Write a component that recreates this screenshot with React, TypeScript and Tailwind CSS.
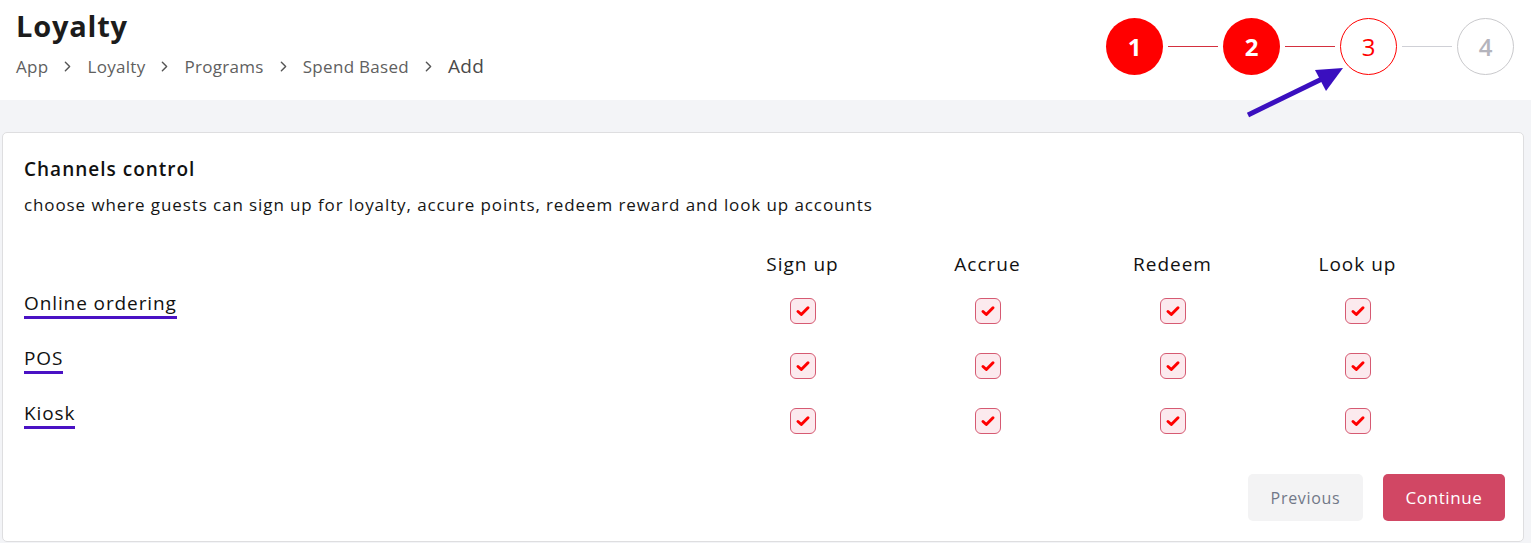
import { ChevronRight } from "lucide-react";

const columns = ["Sign up", "Accrue", "Redeem", "Look up"];
const channels = ["Online ordering", "POS", "Kiosk"];
const crumbs = ["App", "Loyalty", "Programs", "Spend Based"];

const CheckBox = () => (
  <span className="flex h-[26px] w-[26px] items-center justify-center rounded-[6px] border border-[#d65a72] bg-[#fceaee]">
    <svg width="16" height="16" viewBox="0 0 16 16" fill="none">
      <path d="M3 8.5 6.3 11.5 13 4.8" stroke="#ff0000" strokeWidth="3" strokeLinecap="round" strokeLinejoin="round" />
    </svg>
  </span>
);

const Step = ({ n, state }: { n: number; state: "done" | "current" | "todo" }) => {
  const cls =
    state === "done"
      ? "bg-[#ff0000] text-white font-bold"
      : state === "current"
        ? "border border-[#ff0000] bg-white text-[#ff0000]"
        : "border border-[#c9c9cc] bg-white text-[#b4b4bc] font-semibold";
  return (
    <div className={`flex h-[57px] w-[57px] items-center justify-center rounded-full text-[24px] ${cls}`}>{n}</div>
  );
};

const App = () => {
  return (
    <div className="relative min-h-[543px] w-full bg-[#f3f4f7] font-['Open_Sans',sans-serif]">
      <header className="flex h-[100px] items-start justify-between bg-white pl-4 pr-[17px]">
        <div className="flex flex-col">
          <h1 className="mt-[7px] text-[29px] font-bold leading-[38px] tracking-[0.8px] text-[#1c1c1c]">Loyalty</h1>
          <nav className="mt-[7px] flex items-center gap-[11px] text-[17px] tracking-[0.3px] text-[#606060]">
            {crumbs.map((c) => (
              <span key={c} className="flex items-center gap-[11px]">
                {c}
                <ChevronRight size={17} strokeWidth={2} className="text-[#555]" />
              </span>
            ))}
            <span className="text-[19px] text-[#4a4a4a]">Add</span>
          </nav>
        </div>
        <div className="mt-[18px] flex items-center">
          <Step n={1} state="done" />
          <span className="mx-[5px] h-[1.5px] w-[50px] bg-[#d4303f]" />
          <Step n={2} state="done" />
          <span className="mx-[5px] h-[1.5px] w-[50px] bg-[#d4303f]" />
          <Step n={3} state="current" />
          <span className="mx-[5px] h-[1px] w-[50px] bg-[#cfd0d6]" />
          <Step n={4} state="todo" />
        </div>
      </header>

      <svg className="absolute left-[1240px] top-[60px]" width="110" height="64" viewBox="1240 60 110 64">
        <path d="M1248 115 1326 77" stroke="#3a0fbf" strokeWidth="5" />
        <path d="M1343 68 1315 70 1326 91Z" fill="#3a0fbf" />
      </svg>

      <main className="pl-[2px] pr-[7px] pt-[32px]">
        <section className="flex h-[410px] flex-col rounded-[5px] border border-[#dedee0] bg-white px-[21px] pt-[22px]">
          <h2 className="text-[19px] font-semibold leading-[28px] tracking-[1px] text-[#111]">Channels control</h2>
          <p className="mt-[10px] text-[17px] leading-[24px] tracking-[0.9px] text-[#151515]">
            choose where guests can sign up for loyalty, accure points, redeem reward and look up accounts
          </p>

          <div className="mt-[33px] grid grid-cols-[686px_185px_185px_185px_185px]">
            <div />
            {columns.map((c) => (
              <div key={c} className="text-center text-[19px] leading-[28px] tracking-[1px] text-[#111]">
                {c}
              </div>
            ))}
            {channels.map((ch) => (
              <div key={ch} className="contents">
                <div className="mt-[12px] h-[43px]">
                  <span className="border-b-[3px] border-[#4a12c4] pb-0 text-[19px] leading-[26px] tracking-[0.9px] text-[#111]">
                    {ch}
                  </span>
                </div>
                {columns.map((c) => (
                  <div key={c} className="mt-[12px] flex h-[43px] justify-center pt-[8px]">
                    <CheckBox />
                  </div>
                ))}
              </div>
            ))}
          </div>

          <div className="mb-[20px] mr-[-3px] mt-auto flex justify-end gap-[20px]">
            <button className="h-[47px] w-[115px] rounded-[5px] bg-[#f3f3f4] text-[16px] tracking-[0.7px] text-[#717888]">Previous</button>
            <button className="h-[47px] w-[122px] rounded-[5px] bg-[#d14764] text-[17px] tracking-[0.6px] text-white">Continue</button>
          </div>
        </section>
      </main>
    </div>
  );
};

export default App;
